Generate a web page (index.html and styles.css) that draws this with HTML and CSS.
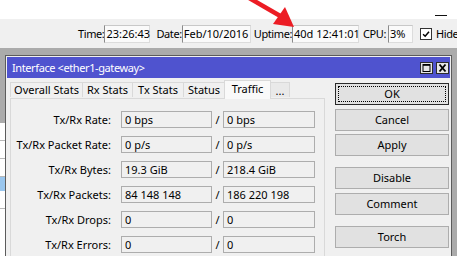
FILE: index.html
```html
<!DOCTYPE html>
<html>
<head>
<meta charset="utf-8">
<link rel="stylesheet" href="styles.css">
</head>
<body>
<div class="screen">
  <div class="topstrip"><span class="mindash"></span></div>
  <div class="toolbar">
    <span class="tlabel">Time:</span><span class="tbox w-time">23:26:43</span>
    <span class="tlabel gap6">Date:</span><span class="tbox w-date">Feb/10/2016</span>
    <span class="tlabel gap3">Uptime:</span><span class="tbox w-up">40d 12:41:01</span>
    <span class="tlabel gap4">CPU:</span><span class="tbox w-cpu">3%</span>
    <span class="check gap7"><svg viewBox="0 0 12 12" width="12" height="12"><path d="M2.5 6.2 L5 8.6 L9.6 3.2" fill="none" stroke="#000" stroke-width="1.8"/></svg></span>
    <span class="tlabel gap4">Hide</span>
  </div>
  <div class="desk">
    <div class="sidelist">
      <div class="sl-head"></div>
      <div class="sl-row"></div>
      <div class="sl-row"></div>
      <div class="sl-row"></div>
      <div class="sl-row sel"></div>
      <div class="sl-row"></div>
    </div>
    <div class="window">
      <div class="titlebar">
        <span class="title">Interface &lt;ether1-gateway&gt;</span>
        <span class="tbtns">
          <span class="tbtn"><svg viewBox="0 0 11 10" width="11" height="10"><rect x="2" y="1.5" width="7" height="7" fill="none" stroke="#000" stroke-width="1"/><line x1="2" y1="2" x2="9" y2="2" stroke="#000" stroke-width="1.6"/></svg></span>
          <span class="tbtn"><svg viewBox="0 0 11 10" width="11" height="10"><path d="M2.5 1.5 L8.5 8.5 M8.5 1.5 L2.5 8.5" stroke="#000" stroke-width="1.9"/></svg></span>
        </span>
      </div>
      <div class="body">
        <div class="main">
          <div class="tabs">
            <span class="tab w-ov">Overall Stats</span>
            <span class="tab w-rx">Rx Stats</span>
            <span class="tab w-tx">Tx Stats</span>
            <span class="tab w-st">Status</span>
            <span class="tab active w-tr">Traffic</span>
            <span class="tab w-more">...</span>
          </div>
          <div class="page">
            <div class="row"><span class="lbl">Tx/Rx Rate:</span><span class="fld">0 bps</span><span class="slash">/</span><span class="fld">0 bps</span></div>
            <div class="row"><span class="lbl">Tx/Rx Packet Rate:</span><span class="fld">0 p/s</span><span class="slash">/</span><span class="fld">0 p/s</span></div>
            <div class="row"><span class="lbl">Tx/Rx Bytes:</span><span class="fld">19.3 GiB</span><span class="slash">/</span><span class="fld">218.4 GiB</span></div>
            <div class="row"><span class="lbl">Tx/Rx Packets:</span><span class="fld">84 148 148</span><span class="slash">/</span><span class="fld">186 220 198</span></div>
            <div class="row"><span class="lbl">Tx/Rx Drops:</span><span class="fld">0</span><span class="slash">/</span><span class="fld">0</span></div>
            <div class="row"><span class="lbl">Tx/Rx Errors:</span><span class="fld">0</span><span class="slash">/</span><span class="fld">0</span></div>
          </div>
        </div>
        <div class="buttons">
          <span class="btn default"><span class="focus">OK</span></span>
          <span class="btn g4">Cancel</span>
          <span class="btn g3">Apply</span>
          <span class="btn g11">Disable</span>
          <span class="btn g4">Comment</span>
          <span class="btn g11">Torch</span>
        </div>
      </div>
    </div>
  </div>
  <svg class="arrow" viewBox="0 0 457 256" width="457" height="256">
    <line x1="244" y1="-5" x2="282" y2="17" stroke="#ec1c24" stroke-width="4.5"/>
    <polygon points="294,27 273,24 285,7" fill="#ec1c24"/>
  </svg>
</div>
</body>
</html>
```
FILE: styles.css
```css
html, body {
  margin: 0;
  padding: 0;
  background: #fff;
}
.screen {
  position: relative;
  width: 457px;
  height: 256px;
  overflow: hidden;
  font-family: "Noto Sans", "Open Sans", sans-serif;
  font-size: 11px;
  color: #000;
}
.topstrip {
  height: 19px;
  background: #fff;
  display: flex;
  justify-content: flex-end;
  align-items: flex-end;
  padding-right: 10px;
  padding-bottom: 3px;
  box-sizing: border-box;
}
.mindash {
  display: block;
  width: 12px;
  height: 1px;
  background: #111;
}
.toolbar {
  height: 29px;
  background: #f0f0f0;
  display: flex;
  align-items: center;
  padding-left: 78px;
  white-space: nowrap;
}
.tlabel {
  flex: none;
  line-height: 18px;
  letter-spacing: -0.4px;
}
.gap3 { margin-left: 3px; }
.gap4 { margin-left: 4px; }
.gap6 { margin-left: 6px; }
.gap7 { margin-left: 7px; }
.tbox {
  flex: none;
  box-sizing: border-box;
  height: 18px;
  line-height: 16px;
  padding-left: 1px;
  background: #fafafa;
  border: 1px solid #dcdcdc;
  border-left-color: #8a8a8a;
  border-top-color: #c8c8c8;
}
.w-time { width: 46px; }
.w-date { width: 69px; }
.w-up { width: 67px; }
.w-cpu { width: 25px; margin-left: 2px; }
.check {
  flex: none;
  box-sizing: border-box;
  width: 12px;
  height: 12px;
  border: 1px solid #333;
  background: #fff;
  display: flex;
  align-items: center;
  justify-content: center;
  margin-top: 1px;
}
.check svg { display: block; }
.desk {
  height: 208px;
  background: #ababab;
  display: flex;
  align-items: flex-start;
}
.sidelist {
  width: 5px;
  height: 208px;
  flex: none;
  background: #fff;
}
.sl-head {
  height: 75px;
  background: #ababab;
}
.sl-row {
  height: 17px;
  border-bottom: 1px solid #b8b8b8;
}
.sl-row:first-of-type { height: 18px; }
.sl-row.sel {
  height: 14px;
  background: #99c6ee;
  border-bottom: none;
}
.window {
  margin-top: 7px;
  width: 447px;
  height: 210px;
  flex: none;
  box-sizing: border-box;
  border: 1px solid #5c5c5c;
  padding: 1px;
  background: #f0f0f0;
}
.titlebar {
  height: 21px;
  background: #4f53cf;
  display: flex;
  align-items: center;
  justify-content: space-between;
  padding-left: 5px;
  padding-right: 1px;
}
.title {
  color: #fff;
  white-space: nowrap;
  letter-spacing: -0.4px;
}
.tbtns {
  display: flex;
  gap: 3px;
}
.tbtn {
  box-sizing: border-box;
  width: 13px;
  height: 12px;
  background: #e6e6e6;
  border: 1px solid #2c2c2c;
  display: flex;
  align-items: center;
  justify-content: center;
}
.tbtn svg { display: block; }
.body {
  display: flex;
  padding-left: 3px;
  padding-top: 2px;
}
.main {
  width: 315px;
  flex: none;
}
.tabs {
  display: flex;
  align-items: flex-end;
  height: 18px;
  position: relative;
  z-index: 1;
  white-space: nowrap;
}
.tab {
  box-sizing: border-box;
  height: 15px;
  line-height: 13px;
  text-align: center;
  background: #f0f0f0;
  border: 1px solid #d9d9d9;
  border-right: none;
  border-bottom: none;
  margin-bottom: 1px;
}
.tab.w-more {
  border-right: 1px solid #d9d9d9;
  background: #e9e9e9;
  line-height: 16px;
}
.tab.active {
  height: 19px;
  line-height: 15px;
  margin-bottom: -1px;
  background: #f9f9f9;
  border-right: 1px solid #d9d9d9;
}
.tab.active + .tab { border-left: none; }
.w-ov { width: 72px; }
.w-rx { width: 50px; }
.w-tx { width: 51px; }
.w-st { width: 41px; }
.w-tr { width: 47px; }
.w-more { width: 19px; }
.page {
  box-sizing: border-box;
  height: 160px;
  border: 1px solid #d9d9d9;
  background: #f0f0f0;
  padding-top: 12px;
  display: flex;
  flex-direction: column;
  gap: 8px;
}
.row {
  display: grid;
  grid-template-columns: 110px 91px 11px 92px;
  height: 17px;
  align-items: center;
}
.lbl {
  text-align: right;
  padding-right: 10px;
  white-space: nowrap;
}
.fld {
  box-sizing: border-box;
  height: 17px;
  line-height: 15px;
  border: 1px solid #adadad;
  background: #f0f0f0;
  padding-left: 3px;
  white-space: nowrap;
}
.slash {
  text-align: center;
}
.buttons {
  width: 114px;
  flex: none;
  margin-left: 10px;
  margin-top: 3px;
  display: flex;
  flex-direction: column;
}
.btn {
  box-sizing: border-box;
  height: 22px;
  line-height: 20px;
  text-align: center;
  background: #e1e1e1;
  border: 1px solid #adadad;
}
.btn.default {
  border-color: #2a2a2a;
  padding: 2px;
  line-height: 16px;
}
.focus {
  display: block;
  height: 16px;
  box-sizing: border-box;
  border: 1px dotted #000;
  line-height: 14px;
}
.g3 { margin-top: 3px; }
.g4 { margin-top: 4px; }
.g11 { margin-top: 11px; }
.arrow {
  position: absolute;
  left: 0;
  top: 0;
  pointer-events: none;
}
```
